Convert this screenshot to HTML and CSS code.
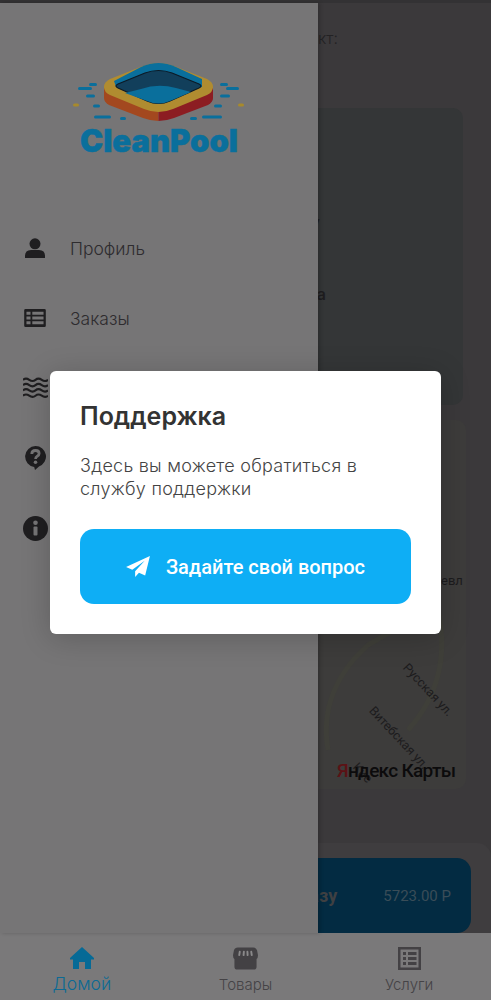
FILE: index.html
```html
<!DOCTYPE html>
<html lang="ru">
<head>
  <meta charset="UTF-8">
  <meta name="viewport" content="width=device-width, initial-scale=1.0">
  <title>CleanPool</title>
  <link rel="stylesheet" href="styles.css">
</head>
<body>
  <div class="app">
    <div class="status__bar"></div>

    <main class="home">
      <p class="home__contact">Ваш контакт:</p>
      <div class="home__card">
        <p class="home__line home__line--first">Заказ на очистку</p>
        <p class="home__line home__line--second">Доставка товара</p>
      </div>
      <div class="home__map">
        <svg class="map__roads" width="435" height="368" viewBox="0 0 435 368"><path fill="none" stroke="#3f3f39" stroke-width="5" d="M300 330Q290 270 340 225L400 190M410 190Q425 260 380 310"/></svg>
        <span class="map__street map__street--one">Русская ул.</span>
        <span class="map__street map__street--two">Витебская ул.</span>
        <span class="map__street map__street--three">Кие</span>
        <span class="map__side">евл</span>
        <span class="map__brand"><b>Я</b>ндекс Карты</span>
      </div>
      <div class="home__footer">
        <div class="order__button">
          <span class="order__title">Оформить заказ сразу</span>
          <span class="order__price">5723.00 Р</span>
        </div>
      </div>
    </main>

    <nav class="tabbar">
      <a class="tabbar__item tabbar__item--active">
        <svg width="24" height="22" viewBox="0 0 24 22"><path fill="#066a96" d="M12 0 0 11v1.500h3V22h6v-7h6v7h6V12.500h3V11z"/></svg>
        <span class="tabbar__text tabbar__text--main">Домой</span>
      </a>
      <a class="tabbar__item">
        <svg width="25" height="23" viewBox="0 0 26 23"><path fill="#434144" d="M5 0h16q3 0 4 3l1 5q0 3-1.500 4V20q0 3-3 3H4.500q-3 0-3-3V12Q0 11 0 8l1-5q1-3 4-3z"/><path fill="none" stroke="#8a898a" stroke-width="2" stroke-linecap="round" d="M7 4.500 6.500 8M11.300 4.500 11 8M15 4.500 15.200 8M19 4.500 19.500 8"/></svg>
        <span class="tabbar__text">Товары</span>
      </a>
      <a class="tabbar__item">
        <svg width="23" height="23" viewBox="0 0 23 23"><path fill="#434144" fill-rule="evenodd" d="M0 0h23v23H0zM2.500 2.500v18h18v-18z"/><path fill="#434144" d="M5 5h3v3H5zM10 5h8.500v3H10zM5 10h3v3H5zM10 10h8.500v3H10zM5 15h3v3H5zM10 15h8.500v3H10z"/></svg>
        <span class="tabbar__text">Услуги</span>
      </a>
    </nav>

    <aside class="drawer">
      <div class="drawer__logo">
        <svg class="logo__mark" width="172" height="62" viewBox="0 0 172 62">
          <g fill="#0a6f9c">
            <rect x="16" y="23" width="8" height="3" rx="1.500"/><rect x="5" y="27" width="14" height="3" rx="1.500"/>
            <rect x="13" y="34.500" width="9" height="3" rx="1.500"/><rect x="20" y="44.500" width="7" height="3" rx="1.500"/>
            <rect x="21" y="55.500" width="17" height="3" rx="1.500"/><rect x="47" y="57" width="6" height="3" rx="1.500"/>
            <rect x="147" y="23" width="8" height="3" rx="1.500"/><rect x="153" y="27" width="13" height="3" rx="1.500"/>
            <rect x="147" y="34.500" width="10" height="3" rx="1.500"/><rect x="141" y="44.500" width="8" height="3" rx="1.500"/>
            <rect x="129" y="55.500" width="20" height="3" rx="1.500"/><rect x="117" y="57" width="7" height="3" rx="1.500"/>
          </g>
          <rect x="0" y="43.500" width="6" height="3" rx="1.500" fill="#a78a2c"/>
          <rect x="165" y="43.500" width="6" height="3" rx="1.500" fill="#a78a2c"/>
          <path fill="#a3481f" d="M31 28V38Q31 42 36 45L70 58Q78 61 85.500 61V40z"/>
          <path fill="#8c1d22" d="M140 28V38Q140 42 135 45L101 58Q93 61 85.500 61V40z"/>
          <path fill="#b08c30" d="M37 19 70 6Q85.500 0 101 6L134 19Q140 22 140 27 140 32 134 35L100 49Q85.500 55 71 49L37 35Q31 32 31 27 31 22 37 19z"/>
          <path fill="#0a6f9c" d="M43 27 41 21 68 7Q85.500-1 103 7L129 19V27L85 38z"/>
          <path fill="#123f5b" stroke="#0c1a26" stroke-width="1.200" d="M72 13Q85.500 8 99 13L126 24Q130 26 126 28L97 41Q85.500 46 74 41L45 28Q41 26 45 24z"/>
          <path fill="#0a6f9c" d="M68 29Q85 23 103 28L118 32 97 41Q85.500 46 74 41L52 33z"/>
        </svg>
        <span class="logo__text">CleanPool</span>
      </div>

      <ul class="drawer__list">
        <li class="drawer__item">
          <span class="drawer__icon"><svg width="20" height="20" viewBox="0 0 20 20"><circle cx="10" cy="5.800" r="5.500" fill="#1f1e20"/><path fill="#1f1e20" d="M0 20v-2q0-6 6-6h8q6 0 6 6v2z"/></svg></span>
          <span class="drawer__text">Профиль</span>
        </li>
        <li class="drawer__item">
          <span class="drawer__icon"><svg width="22" height="18" viewBox="0 0 24 20"><path fill="#1f1e20" fill-rule="evenodd" d="M1.500 0h21Q24 0 24 1.500v17q0 1.500-1.500 1.500h-21Q0 20 0 18.500v-17Q0 0 1.500 0zM2.500 3v3.500H7V3zM9 3v3.500h12.500V3zM2.500 8.300v3.400H7V8.300zM9 8.300v3.400h12.500V8.300zM2.500 13.500V17H7v-3.500zM9 13.500V17h12.500v-3.500z"/></svg></span>
          <span class="drawer__text">Заказы</span>
        </li>
        <li class="drawer__item">
          <span class="drawer__icon"><svg width="25" height="22" viewBox="0 0 26 22"><path fill="none" stroke="#1f1e20" stroke-width="2.200" d="M0 2.500q3-2.500 6.500 0t6.500 0 6.500 0 6.500 0M0 8q3-2.500 6.500 0t6.500 0 6.500 0 6.500 0M0 13.500q3-2.500 6.500 0t6.500 0 6.500 0 6.500 0M0 19q3-2.500 6.500 0t6.500 0 6.500 0 6.500 0"/></svg></span>
        </li>
        <li class="drawer__item">
          <span class="drawer__icon"><svg width="21" height="24" viewBox="0 0 21 24"><path fill="#1f1e20" d="M10.500 0a10.500 10.500 0 0 1 3.500 20.400L10 24l-.8-3.100A10.500 10.500 0 0 1 10.500 0z"/><path fill="none" stroke="#767576" stroke-width="2.800" d="M6.800 8q0-3.500 3.700-3.500 3.600 0 3.600 3 0 1.800-1.900 2.800-1.600.9-1.600 2.700"/><circle cx="10.500" cy="16.300" r="1.800" fill="#767576"/></svg></span>
        </li>
        <li class="drawer__item">
          <span class="drawer__icon"><svg width="25" height="25" viewBox="0 0 25 25"><circle cx="12.500" cy="12.500" r="12.500" fill="#1f1e20"/><rect x="10.500" y="10.500" width="4" height="9" rx="1" fill="#767576"/><circle cx="12.500" cy="6.800" r="2.300" fill="#767576"/></svg></span>
        </li>
      </ul>
    </aside>

    <section class="support">
      <h2 class="support__title">Поддержка</h2>
      <p class="support__text">Здесь вы можете обратиться в<br>службу поддержки</p>
      <button class="support__button">
        <svg width="24" height="21" viewBox="0 0 25 22"><path fill="#fff" d="M25 0 0 11.500l6.500 3L19.500 5 9.500 16v6l4-4.500 6.500 3z"/></svg>
        <span>Задайте свой вопрос</span>
      </button>
    </section>
  </div>
</body>
</html>
```

FILE: styles.css
```css
* {
  margin: 0;
  padding: 0;
  box-sizing: border-box;
}

body {
  background: #3b393b;
  font-family: "Inter", sans-serif;
  overflow: hidden;
}

.app {
  position: relative;
  display: flex;
  flex-direction: column;
  width: 491px;
  height: 1000px;
  overflow: hidden;
}

.status__bar {
  height: 3px;
  background: #333234;
}

/* page behind the drawer */
.home {
  flex: 1;
  display: flex;
  flex-direction: column;
  min-height: 0;
  background: #3b393b;
}

.home__contact {
  height: 105px;
  padding: 25px 153px 0 0;
  font-size: 16px;
  font-weight: 300;
  text-align: right;
  color: #232224;
}

.home__card {
  position: relative;
  height: 297px;
  margin: 0 28px 15px 28px;
  background: #343637;
  border-radius: 10px;
}

.home__line {
  position: absolute;
  font-size: 16px;
  line-height: 22px;
  white-space: nowrap;
  color: #1e1d1f;
}

.home__line--first { top: 103px; right: 143px; }
.home__line--second { top: 175px; right: 137px; font-weight: 600; }

.home__map {
  position: relative;
  flex: 1;
  margin: 0 25px 54px 28px;
  background: #3d3c3b;
  border-radius: 10px;
  overflow: hidden;
}

.map__roads {
  position: absolute;
  top: 0;
  left: 0;
}

.map__street {
  position: absolute;
  font-family: "Roboto", sans-serif;
  font-size: 12.500px;
  color: #1c1b1d;
  white-space: nowrap;
  transform: rotate(47deg);
}

.map__street--one { left: 367px; top: 262px; }
.map__street--two { left: 331px; top: 310px; }
.map__street--three { left: 324px; top: 345px; }

.map__side {
  position: absolute;
  left: 413px;
  top: 153px;
  font-family: "Roboto", sans-serif;
  font-size: 13px;
  color: #1c1b1d;
}

.map__brand {
  position: absolute;
  left: 309px;
  top: 339px;
  font-family: "Roboto", sans-serif;
  font-size: 19px;
  font-weight: 500;
  letter-spacing: -0.7px;
  color: #0c0b0c;
  white-space: nowrap;
}

.map__brand b {
  font-weight: 500;
  color: #5c1215;
}

.home__footer {
  height: 90px;
  padding: 15px 20px 0 0;
  background: #3f3d3f;
  border-radius: 14px 14px 0 0;
}

.order__button {
  display: flex;
  justify-content: flex-end;
  align-items: center;
  gap: 46px;
  height: 75px;
  padding-right: 20px;
  background: #032b42;
  border-radius: 14px;
  white-space: nowrap;
}

.order__title {
  font-family: "Roboto", sans-serif;
  font-size: 18px;
  font-weight: 700;
  color: #3f4042;
}

.order__price {
  font-family: "Roboto", sans-serif;
  font-size: 15px;
  color: #3a4d58;
}

.tabbar {
  display: flex;
  height: 67px;
  padding-top: 14px;
  background: #7a797a;
}

.tabbar__item {
  display: flex;
  flex-direction: column;
  align-items: center;
  gap: 5px;
  width: 164px;
  color: #454346;
}

.tabbar__text {
  font-size: 15px;
  font-weight: 300;
  line-height: 20px;
}

.tabbar__item--active {
  color: #0c6a94;
}

.tabbar__text--main {
  font-size: 17.500px;
}

/* drawer and dialog lie over the page */
.drawer {
  position: absolute;
  top: 3px;
  left: 0;
  bottom: 67px;
  width: 318px;
  background: #767576;
  box-shadow: 2px 0 4px rgba(0, 0, 0, 0.2);
}

.drawer__logo {
  display: flex;
  flex-direction: column;
  align-items: center;
  padding-top: 57px;
}

.logo__text {
  margin-top: 3px;
  font-size: 31px;
  font-weight: 900;
  line-height: 32px;
  color: #0a6f9c;
  -webkit-text-stroke: 0.5px #0a6f9c;
}

.drawer__list {
  list-style: none;
  margin-top: 56px;
}

.drawer__item {
  display: flex;
  align-items: center;
  gap: 22px;
  height: 70px;
  padding-left: 22px;
}

.drawer__icon {
  display: flex;
  justify-content: center;
  width: 26px;
}

.drawer__text {
  font-size: 17.500px;
  font-weight: 300;
  color: #2e2c2f;
}

.support {
  position: absolute;
  top: 371px;
  left: 50px;
  width: 391px;
  height: 263px;
  padding: 30px;
  background: #fff;
  border-radius: 6px;
  box-shadow: 0 4px 30px rgba(0, 0, 0, 0.2);
}

.support__title {
  font-size: 25px;
  font-weight: 600;
  line-height: 30px;
  color: #333;
}

.support__text {
  margin-top: 23px;
  font-size: 18px;
  font-weight: 300;
  letter-spacing: 0.25px;
  line-height: 23px;
  color: #444;
}

.support__button {
  display: flex;
  justify-content: center;
  align-items: center;
  gap: 16px;
  width: 100%;
  height: 75px;
  margin-top: 29px;
  border: none;
  border-radius: 14px;
  background: #0eaef5;
  color: #fff;
  font-family: "Roboto", sans-serif;
  font-size: 20px;
  font-weight: 500;
}
```
